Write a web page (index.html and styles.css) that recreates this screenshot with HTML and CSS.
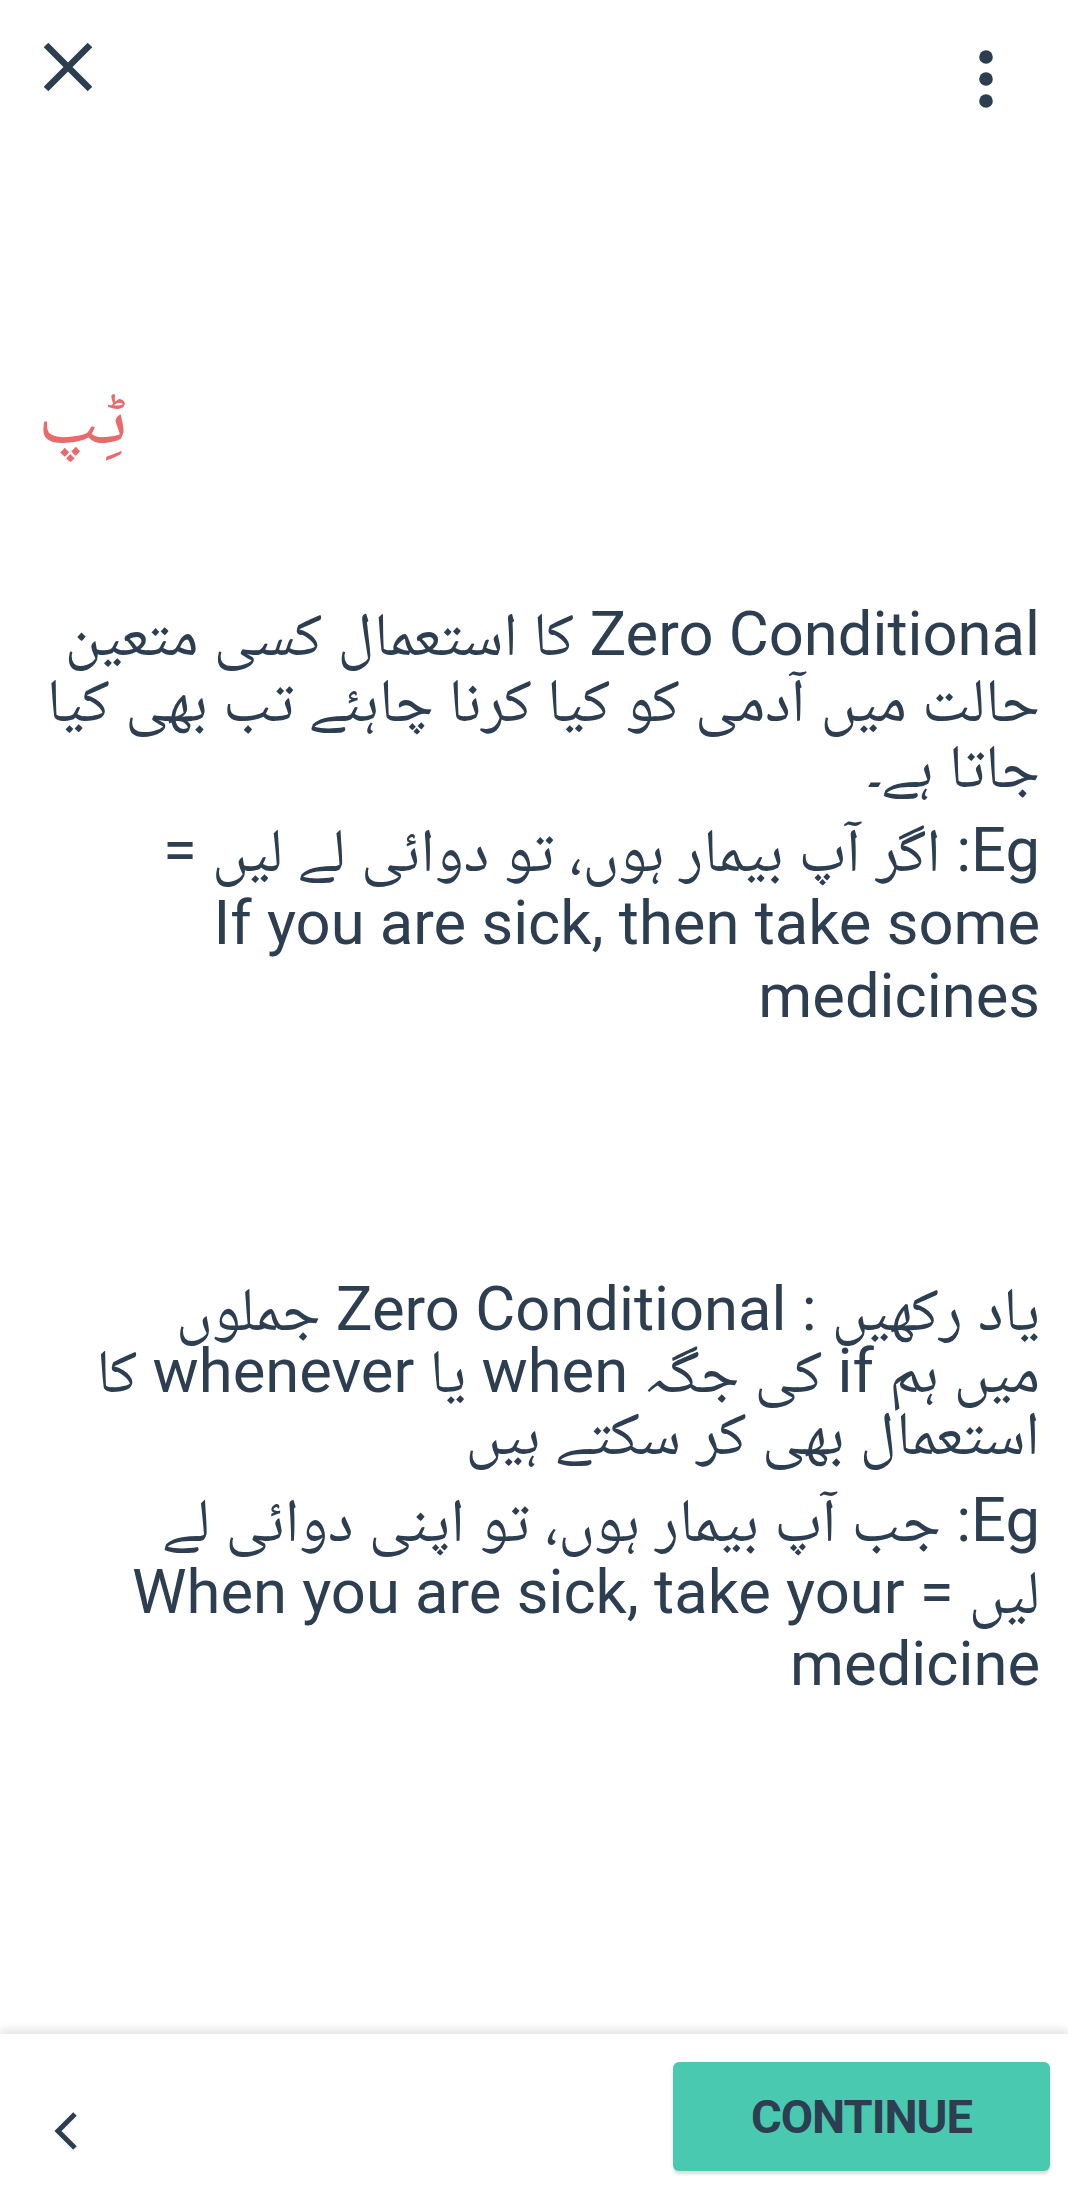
FILE: index.html
```html
<!DOCTYPE html>
<html lang="ur">
<head>
<meta charset="utf-8">
<title>Tip</title>
<link rel="stylesheet" href="styles.css">
</head>
<body>
<div class="screen">
  <header class="topbar">
    <button class="icon-btn close-btn" aria-label="Close">
      <svg width="50" height="50" viewBox="0 0 50 50"><path d="M3 3 L47 47 M47 3 L3 47" stroke="#2c3e50" stroke-width="6.5" fill="none"/></svg>
    </button>
    <button class="icon-btn more-btn" aria-label="More">
      <svg width="14" height="58" viewBox="0 0 14 58"><circle cx="7" cy="7" r="6.8" fill="#2c3e50"/><circle cx="7" cy="29" r="6.8" fill="#2c3e50"/><circle cx="7" cy="51" r="6.8" fill="#2c3e50"/></svg>
    </button>
  </header>

  <main class="content">
    <h2 class="tip-title" dir="rtl">ٹِپ</h2>

    <section class="tip-block block-one" dir="rtl">
      <p class="lines lines-urdu">Zero Conditional کا استعمال کسی متعین<br>حالت میں آدمی کو کیا کرنا چاہئے تب بھی کیا<br>جاتا ہے۔</p>
      <p class="lines lines-example">Eg: اگر آپ بیمار ہوں، تو دوائی لے لیں =<br>If you are sick, then take some<br>medicines</p>
    </section>

    <section class="tip-block block-two" dir="rtl">
      <p class="lines lines-urdu tight">یاد رکھیں : Zero Conditional جملوں<br>میں ہم if کی جگہ when یا whenever کا<br>استعمال بھی کر سکتے ہیں</p>
      <p class="lines lines-example wide">Eg: جب آپ بیمار ہوں، تو اپنی دوائی لے<br>لیں = When you are sick, take your<br>medicine</p>
    </section>
  </main>

  <footer class="bottombar">
    <button class="icon-btn back-btn" aria-label="Back">
      <svg width="24" height="38" viewBox="0 0 24 38"><path d="M21 2 L4 19 L21 36" stroke="#2c3e50" stroke-width="5" fill="none"/></svg>
    </button>
    <button class="continue-btn">CONTINUE</button>
  </footer>
</div>
</body>
</html>
```

FILE: styles.css
```css
* { box-sizing: border-box; }

html, body {
  margin: 0;
  padding: 0;
  background: #ffffff;
}

.screen {
  width: 1068px;
  height: 2196px;
  display: flex;
  flex-direction: column;
  background: #ffffff;
  color: #2c3e50;
  font-family: Roboto, "Noto Naskh Arabic", "Noto Sans Arabic", "DejaVu Sans", sans-serif;
}

.icon-btn {
  border: 0;
  background: transparent;
  padding: 0;
  margin: 0;
  display: block;
  line-height: 0;
}

.topbar {
  display: flex;
  justify-content: space-between;
  align-items: flex-start;
  padding: 42px 75px 0 43px;
  height: 130px;
}

.more-btn { margin-top: 8px; }

.content {
  flex: 1;
  padding: 0 28px 0 38px;
}

.tip-title {
  margin: 242px 0 0 0;
  font-size: 77px;
  line-height: 90px;
  font-weight: 400;
  color: #ea6a6c;
  text-align: left;
}

.tip-block {
  text-align: right;
}

.lines {
  margin: 0;
  font-size: 61.5px;
  white-space: nowrap;
}

.lines-urdu { line-height: 66px; }
.lines-example { line-height: 73px; margin-top: 15px; }

.block-one { margin-top: 139px; }
.block-two { margin-top: 245px; }

.lines-urdu.tight { line-height: 62px; }
.lines-example.wide { line-height: 72px; margin-top: 20px; }

.bottombar {
  height: 163px;
  display: flex;
  align-items: flex-start;
  justify-content: space-between;
  padding: 28px 18px 0 54px;
  box-shadow: 0 -4px 8px rgba(0, 0, 0, 0.10);
  border-top: 1px solid #ececec;
}

.back-btn { margin-top: 50px; }

.continue-btn {
  width: 377px;
  height: 109px;
  border: 0;
  border-radius: 6px;
  background: #48c9b0;
  color: #2c3e50;
  font-family: Roboto, sans-serif;
  font-weight: 700;
  font-size: 47px;
  letter-spacing: -1px;
  box-shadow: 0 3px 3px rgba(0, 0, 0, 0.14);
}
```
